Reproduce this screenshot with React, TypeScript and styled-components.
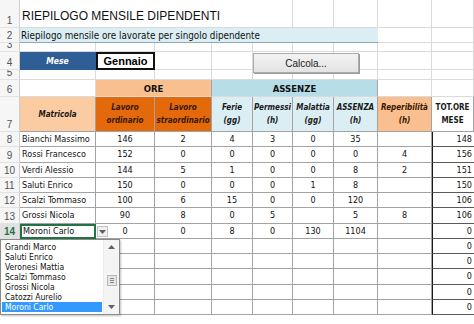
import * as React from 'react'
import styled, { createGlobalStyle } from 'styled-components'

const GlobalStyle = createGlobalStyle`
  html, body {
    margin: 0;
    padding: 0;
    background: #fff;
  }
  body {
    font-family: 'Liberation Sans', Arial, sans-serif;
  }
`

const COLS = [20, 76, 59, 57, 41, 40, 41, 44, 54, 42]
const TOP_ROWS = [28, 15, 9, 18, 10, 17, 35]
const DATA_ROWS = 12
const DATA_H = 15.25

const GRID_LINE = '#dadada'
const TABLE_LINE = '#a3a3a3'
const CELL_FONT = `'DejaVu Sans Condensed', 'Liberation Sans', Arial, sans-serif`

const Sheet = styled.div`
  position: relative;
  width: 474px;
  height: 324px;
  overflow: hidden;
  background: #fff;
`

const Grid = styled.div`
  display: grid;
  grid-template-columns: ${ COLS.map(c => `${ c }px`).join(' ') };
  grid-template-rows: ${ TOP_ROWS.map(r => `${ r }px`).join(' ') } repeat(${ DATA_ROWS }, ${ DATA_H }px);
`

const RowHead = styled.div<{ $active?: boolean }>`
  box-sizing: border-box;
  display: flex;
  align-items: flex-end;
  justify-content: center;
  overflow: hidden;
  padding-bottom: 1px;
  background: ${ ({ $active }) => $active ? '#e1e1e1' : '#f6f6f6' };
  border-right: 1px solid #cfcfcf;
  border-bottom: 1px solid #e2e2e2;
  color: ${ ({ $active }) => $active ? '#217346' : '#555' };
  font-weight: ${ ({ $active }) => $active ? 700 : 400 };
  font-size: 10px;
  line-height: 11px;
`

const Cell = styled.div<{ $span?: number }>`
  box-sizing: border-box;
  grid-column: span ${ ({ $span }) => $span || 1 };
  border-right: 1px solid ${ GRID_LINE };
  border-bottom: 1px solid ${ GRID_LINE };
`

const TitleCell = styled(Cell)`
  display: flex;
  align-items: flex-end;
  padding: 0 0 4px 2px;
  font-size: 12px;
  line-height: 14px;
  color: #111;
  white-space: nowrap;
  border-right: none;
`

const SubtitleCell = styled(Cell)`
  display: flex;
  align-items: center;
  padding-left: 1px;
  background: #dbeef4;
  border-bottom: 1px solid #8ea9bd;
  border-right: none;
  font-family: ${ CELL_FONT };
  font-size: 9.8px;
  color: #111;
  white-space: nowrap;
`

const MonthLabel = styled(Cell)`
  display: flex;
  align-items: center;
  justify-content: center;
  background: #2f5e97;
  border-color: #2f5e97;
  color: #fff;
  font-family: ${ CELL_FONT };
  font-weight: 700;
  font-style: italic;
  font-size: 8.5px;
`

const MonthValue = styled(Cell)`
  display: flex;
  align-items: center;
  justify-content: center;
  border: 2px solid #111;
  font-weight: 700;
  font-size: 11px;
  color: #000;
`

const GroupHead = styled(Cell)<{ $bg: string }>`
  display: flex;
  align-items: center;
  justify-content: center;
  background: ${ ({ $bg }) => $bg };
  border-right-color: ${ TABLE_LINE };
  font-family: ${ CELL_FONT };
  font-weight: 700;
  font-size: 9.5px;
  color: #111;
`

const ColHead = styled(Cell)<{ $bg: string, $ink?: string, $plain?: boolean }>`
  display: flex;
  align-items: center;
  justify-content: center;
  text-align: center;
  background: ${ ({ $bg }) => $bg };
  border-right-color: ${ TABLE_LINE };
  border-bottom-color: ${ TABLE_LINE };
  font-family: ${ CELL_FONT };
  font-weight: 700;
  font-style: ${ ({ $plain }) => $plain ? 'normal' : 'italic' };
  font-size: 8px;
  line-height: 13px;
  color: ${ ({ $ink }) => $ink || '#1a1a1a' };
  white-space: pre;
`

const DataCell = styled(Cell)<{ $align?: 'left' | 'center' }>`
  display: flex;
  align-items: center;
  justify-content: ${ ({ $align }) => $align === 'left' ? 'flex-start' : 'center' };
  padding-left: ${ ({ $align }) => $align === 'left' ? '2px' : '0' };
  border-right-color: ${ TABLE_LINE };
  border-bottom-color: ${ TABLE_LINE };
  font-family: ${ CELL_FONT };
  font-size: 9px;
  color: #111;
  white-space: nowrap;
`

const SelectedCell = styled(DataCell)`
  border: 2px solid #217346;
  padding-left: 1px;
`

const TotalCell = styled(Cell)`
  display: flex;
  align-items: center;
  justify-content: flex-end;
  padding-right: 2px;
  border-left: 1px solid #1a1a1a;
  border-bottom-color: #5a5a5a;
  border-right: none;
  font-family: ${ CELL_FONT };
  font-size: 9px;
  color: #111;
`

const CalcButton = styled.button`
  position: absolute;
  left: 253px;
  top: 53px;
  width: 106px;
  height: 20px;
  padding: 0;
  border: 1px solid #acacac;
  border-radius: 0;
  background: linear-gradient(#f3f3f3, #e3e3e3);
  box-shadow: 1px 1px 0 #9a9a9a;
  font-family: 'Liberation Sans', Arial, sans-serif;
  font-size: 10px;
  color: #222;
`

const ArrowButton = styled.div`
  position: absolute;
  left: 97px;
  top: 226px;
  width: 11px;
  height: 11px;
  box-sizing: border-box;
  display: flex;
  align-items: center;
  justify-content: center;
  background: #f0f0f0;
  border: 1px solid #c4c4c4;
`

const DropList = styled.div`
  position: absolute;
  left: 0;
  top: 239px;
  width: 120px;
  height: 76px;
  box-sizing: border-box;
  display: flex;
  background: #fff;
  border: 1px solid #8a8a8a;
  box-shadow: 1px 1px 2px rgba(0, 0, 0, 0.25);
`

const Items = styled.div`
  flex: 1;
  padding: 2px 1px 0 1px;
`

const Item = styled.div<{ $selected?: boolean }>`
  height: 10px;
  line-height: 10px;
  padding-left: 3px;
  font-family: ${ CELL_FONT };
  font-size: 8.5px;
  white-space: nowrap;
  color: ${ ({ $selected }) => $selected ? '#fff' : '#111' };
  background: ${ ({ $selected }) => $selected ? '#3399ff' : 'transparent' };
`

const ScrollBar = styled.div`
  width: 15px;
  display: flex;
  flex-direction: column;
  align-items: center;
  background: #f4f4f4;
  border-left: 1px solid #ececec;
`

const ScrollArrow = styled.div`
  height: 14px;
  display: flex;
  align-items: center;
  justify-content: center;
`

const ScrollTrack = styled.div`
  flex: 1;
  display: flex;
  flex-direction: column;
  justify-content: flex-end;
  padding-bottom: 14px;
`

const Thumb = styled.div`
  width: 10px;
  height: 11px;
  box-sizing: border-box;
  display: flex;
  flex-direction: column;
  align-items: center;
  justify-content: center;
  gap: 1px;
  background: #e6e6e6;
  border: 1px solid #b9b9b9;
`

const Grip = styled.span`
  display: block;
  width: 4px;
  height: 1px;
  background: #8a8a8a;
`

const Chevron = ({ up }: { up?: boolean }) => (
  <svg width='7' height='4' viewBox='0 0 7 4'>
    <path d={ up ? 'M0 4 L3.5 0 L7 4 Z' : 'M0 0 L3.5 4 L7 0 Z' } fill='#606060' />
  </svg>
)

const employees: string[][] = [
  ['Bianchi Massimo', '146', '2', '4', '3', '0', '35', '', '148'],
  ['Rossi Francesco', '152', '0', '0', '0', '0', '0', '4', '156'],
  ['Verdi Alessio', '144', '5', '1', '0', '0', '8', '2', '151'],
  ['Saluti Enrico', '150', '0', '0', '0', '1', '8', '', '150'],
  ['Scalzi Tommaso', '100', '6', '15', '0', '0', '120', '', '106'],
  ['Grossi Nicola', '90', '8', '0', '5', '', '5', '8', '106'],
  ['Moroni Carlo', '0', '0', '8', '0', '130', '1104', '', '0'],
  ['', '', '', '', '', '', '', '', '0'],
  ['', '', '', '', '', '', '', '', '0'],
  ['', '', '', '', '', '', '', '', '0'],
  ['', '', '', '', '', '', '', '', '0'],
  ['', '', '', '', '', '', '', '', '0'],
]

const choices = [
  'Grandi Marco', 'Saluti Enrico', 'Veronesi Mattia', 'Scalzi Tommaso',
  'Grossi Nicola', 'Catozzi Aurelio', 'Moroni Carlo',
]

const SELECTED_ROW = 14

const blanks = (n: number, key: string) =>
  Array.from({ length: n }, (_, i) => <Cell key={ `${ key }-${ i }` } />)

export default function App() {
  return (
    <Sheet>
      <GlobalStyle />
      <Grid>
        <RowHead>1</RowHead>
        <TitleCell $span={ 4 }>RIEPILOGO MENSILE DIPENDENTI</TitleCell>
        { blanks(5, 'r1') }

        <RowHead>2</RowHead>
        <SubtitleCell $span={ 7 }>Riepilogo mensile ore lavorate per singolo dipendente</SubtitleCell>
        { blanks(2, 'r2') }

        <RowHead>3</RowHead>
        { blanks(9, 'r3') }

        <RowHead>4</RowHead>
        <MonthLabel>Mese</MonthLabel>
        <MonthValue>Gennaio</MonthValue>
        { blanks(7, 'r4') }

        <RowHead>5</RowHead>
        { blanks(9, 'r5') }

        <RowHead>6</RowHead>
        <Cell />
        <GroupHead $span={ 2 } $bg='#f9bf8f'>ORE</GroupHead>
        <GroupHead $span={ 4 } $bg='#b7dde8'>ASSENZE</GroupHead>
        { blanks(2, 'r6') }

        <RowHead>7</RowHead>
        <ColHead $bg='#fbcba1'>Matricola</ColHead>
        <ColHead $bg='#e3690b' $ink='#3a1800'>{ 'Lavoro\nordinario' }</ColHead>
        <ColHead $bg='#e3690b' $ink='#3a1800'>{ 'Lavoro\nstraordinario' }</ColHead>
        <ColHead $bg='#dbeef4'>{ 'Ferie\n(gg)' }</ColHead>
        <ColHead $bg='#dbeef4'>{ 'Permessi\n(h)' }</ColHead>
        <ColHead $bg='#dbeef4'>{ 'Malattia\n(gg)' }</ColHead>
        <ColHead $bg='#dbeef4'>{ 'ASSENZA\n(h)' }</ColHead>
        <ColHead $bg='#f9bf8f' $ink='#3a1800'>{ 'Reperibilità\n(h)' }</ColHead>
        <ColHead $bg='#fff' $plain>{ 'TOT.ORE\nMESE' }</ColHead>

        { employees.map((row, i) => {
          const rowNumber = i + 8
          const selected = rowNumber === SELECTED_ROW
          // rows below the selection sit under the open list, their numbers are not seen
          const hidden = rowNumber > SELECTED_ROW
          const [name, ...values] = row
          const total = values.pop()
          return (
            <React.Fragment key={ rowNumber }>
              <RowHead $active={ selected }>{ hidden ? '' : rowNumber }</RowHead>
              { selected
                ? <SelectedCell $align='left'>{ name }</SelectedCell>
                : <DataCell $align='left'>{ name }</DataCell> }
              { values.map((v, j) => <DataCell key={ j }>{ v }</DataCell>) }
              <TotalCell>{ total }</TotalCell>
            </React.Fragment>
          )
        }) }
      </Grid>

      <CalcButton>Calcola...</CalcButton>

      <ArrowButton>
        <Chevron />
      </ArrowButton>

      <DropList>
        <Items>
          { choices.map(c => (
            <Item key={ c } $selected={ c === 'Moroni Carlo' }>{ c }</Item>
          )) }
        </Items>
        <ScrollBar>
          <ScrollArrow><Chevron up /></ScrollArrow>
          <ScrollTrack>
            <Thumb>
              <Grip />
              <Grip />
              <Grip />
            </Thumb>
          </ScrollTrack>
          <ScrollArrow><Chevron /></ScrollArrow>
        </ScrollBar>
      </DropList>
    </Sheet>
  )
}
